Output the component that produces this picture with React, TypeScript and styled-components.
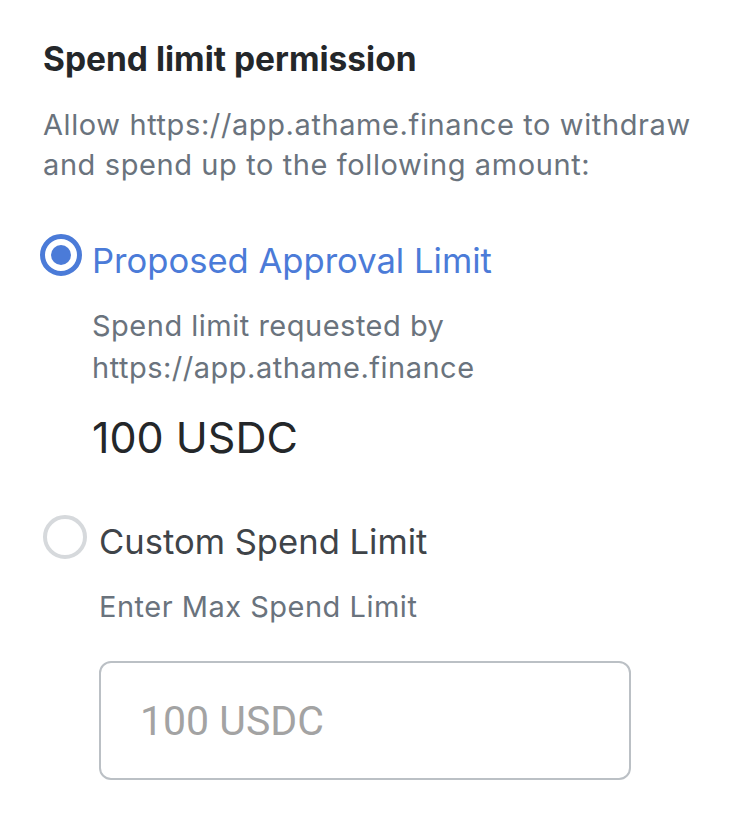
import React from "react";
import styled, { createGlobalStyle } from "styled-components";

const Global = createGlobalStyle`
  html, body { margin: 0; padding: 0; background: #ffffff; }
  body { font-family: "Inter", "Lato", sans-serif; -webkit-font-smoothing: antialiased; }
`;

const Panel = styled.div`
  padding: 39px 40px 40px 43px;
  display: flex;
  flex-direction: column;
`;

const Title = styled.h2`
  margin: 0;
  font-size: 33.5px;
  line-height: 40px;
  font-weight: 700;
  color: #24272a;
`;

const Description = styled.p`
  margin: 26px 0 0;
  font-size: 29px;
  letter-spacing: 0.6px;
  line-height: 40px;
  color: #6a737d;
`;

const Option = styled.div<{ $top: number; $shift: number; $gap: number }>`
  display: grid;
  grid-template-columns: auto 1fr;
  column-gap: ${(p) => p.$gap}px;
  margin-top: ${(p) => p.$top}px;
  margin-left: ${(p) => p.$shift}px;
`;

const Radio = styled.div<{ $checked: boolean; $size: number; $offset: number }>`
  box-sizing: border-box;
  width: ${(p) => p.$size}px;
  height: ${(p) => p.$size}px;
  margin-top: ${(p) => p.$offset}px;
  border-radius: 50%;
  border: ${(p) => (p.$checked ? "5px solid #4b7bd8" : "4px solid #d6d9dc")};
  display: flex;
  align-items: center;
  justify-content: center;
  align-self: start;
  &::after {
    content: "";
    display: ${(p) => (p.$checked ? "block" : "none")};
    width: 20px;
    height: 20px;
    border-radius: 50%;
    background: #4b7bd8;
  }
`;

const Label = styled.div<{ $active: boolean }>`
  font-size: 34.6px;
  line-height: 44px;
  color: ${(p) => (p.$active ? "#4b7bd8" : "#3f4449")};
`;

const Details = styled.div`
  grid-column: 2;
  display: flex;
  flex-direction: column;
`;

const Hint = styled.div<{ $top: number }>`
  margin-top: ${(p) => p.$top}px;
  font-size: 29px;
  letter-spacing: 0.5px;
  line-height: 42px;
  color: #6a737d;
`;

const Amount = styled.div`
  margin-top: 24px;
  font-size: 43px;
  line-height: 48px;
  color: #24272a;
`;

const Input = styled.input`
  box-sizing: border-box;
  margin-top: 33px;
  width: 532px;
  height: 119px;
  border: 2px solid #bbc0c5;
  border-radius: 12px;
  padding: 0 0 0 39px;
  font-family: "Roboto", sans-serif;
  font-size: 41px;
  color: #24272a;
  outline: none;
  &::placeholder {
    color: #a3a3a3;
  }
`;

export default function App() {
  return (
    <>
      <Global />
      <Panel>
        <Title>Spend limit permission</Title>
        <Description>
          Allow https://app.athame.finance to withdraw
          <br />
          and spend up to the following amount:
        </Description>
        <Option $top={53} $shift={-3} $gap={10}>
          <Radio $checked $size={42} $offset={-4} />
          <Label $active>Proposed Approval Limit</Label>
          <Details>
            <Hint $top={23}>
              Spend limit requested by
              <br />
              https://app.athame.finance
            </Hint>
            <Amount>100 USDC</Amount>
          </Details>
        </Option>
        <Option $top={58} $shift={0} $gap={12}>
          <Radio $checked={false} $size={44} $offset={-4} />
          <Label $active={false}>Custom Spend Limit</Label>
          <Details>
            <Hint $top={23}>Enter Max Spend Limit</Hint>
            <Input placeholder="100 USDC" />
          </Details>
        </Option>
      </Panel>
    </>
  );
}
